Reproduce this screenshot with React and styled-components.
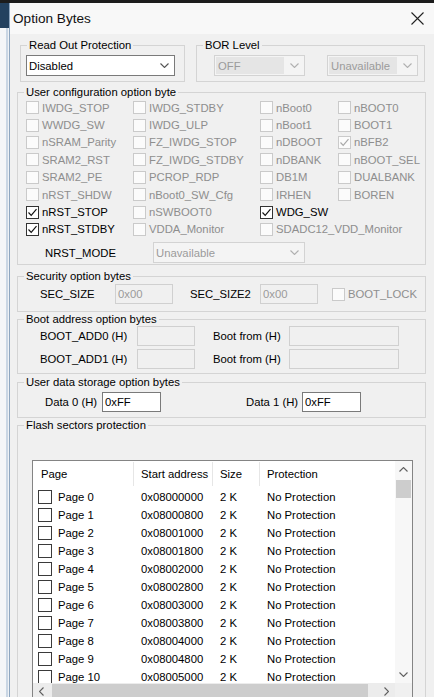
import React from 'react';
import styled, { createGlobalStyle } from 'styled-components';

const GlobalStyle = createGlobalStyle`
  html, body { margin: 0; padding: 0; width: 434px; height: 697px; overflow: hidden; background: #f0f0f0; }
  body { font-family: "Liberation Sans", Arial, sans-serif; font-size: 11.3px; color: #000; }
  * { box-sizing: border-box; }
`;

const Screen = styled.div`
  width: 434px; height: 697px; overflow: hidden;
  display: flex; flex-direction: column; background: #1c1c1c;
`;
const TopEdge = styled.div` height: 3px; flex: none; background: #1c1c1c; `;
const Main = styled.div` flex: 1; display: flex; min-height: 0; `;
const BackWindow = styled.div`
  width: 10px; flex: none; display: flex; flex-direction: column;
  border-right: 1px solid #8ea6bf;
`;
const BackTop = styled.div` height: 25px; background: #23415f; `;
const BackBody = styled.div`
  flex: 1; background: linear-gradient(90deg, #f4f6f8 0 6px, #c9d6e4 6px 8px, #eef2f6 8px);
`;
const Dialog = styled.div`
  flex: 1; min-width: 0; display: flex; flex-direction: column; background: #f0f0f0;
`;
const TitleBar = styled.div`
  height: 31px; flex: none; display: flex; align-items: center; justify-content: space-between;
  padding: 0 10px 0 3px; background: #f8f8f8;
`;
const Title = styled.span` font-size: 13.6px; color: #111; `;
const Body = styled.div`
  flex: 1; min-height: 0; display: flex; flex-direction: column; padding: 0 8px 0 7px;
`;
const TopRow = styled.div` display: flex; gap: 11px; padding-left: 3px; margin-top: 4px; `;

const Group = styled.fieldset`
  margin: ${p => p.$mt || 0}px 0 0 0;
  padding: 0;
  border: 1px solid #d4d4d4;
  min-width: 0;
  flex: none;
  width: ${p => (p.$w ? `${p.$w}px` : 'auto')};
  height: ${p => (p.$h ? `${p.$h}px` : 'auto')};
`;
const Legend = styled.legend`
  padding: 0 2px; margin-left: 6px; line-height: 14px; font-size: 11.3px; color: #000;
`;

const SelectBox = styled.div`
  height: 21px; display: flex; align-items: center;
  width: ${p => (p.$w ? `${p.$w}px` : 'auto')};
  border: 1px solid ${p => (p.$disabled ? '#d3d3d3' : '#7a7a7a')};
  background: ${p => (p.$disabled ? '#f4f4f4' : '#fff')};
`;
const SelectValue = styled.div`
  flex: 1; align-self: stretch; display: flex; align-items: center;
  padding-left: ${p => (p.$shade ? 2 : 2)}px;
  margin: ${p => (p.$shade ? '1px' : '0')};
  background: ${p => (p.$shade ? '#e5e5e5' : 'transparent')};
  color: ${p => (p.$disabled ? '#9b9b9b' : '#000')};
  white-space: nowrap; overflow: hidden;
`;
const ChevronSlot = styled.div`
  width: 19px; flex: none; display: flex; align-items: center; justify-content: center;
`;

const Chevron = ({ color = '#555', dir = 'down' }) => (
  <svg width="9" height="5" viewBox="0 0 9 5" style={{ transform: dir === 'up' ? 'rotate(180deg)' : dir === 'left' ? 'rotate(90deg)' : dir === 'right' ? 'rotate(-90deg)' : 'none' }}>
    <path d="M0.5 0.5 L4.5 4.5 L8.5 0.5" fill="none" stroke={color} strokeWidth="1.1" />
  </svg>
);

const Select = ({ value, disabled, shade, w }) => (
  <SelectBox $disabled={disabled} $w={w}>
    <SelectValue $disabled={disabled} $shade={shade}>{value}</SelectValue>
    <ChevronSlot><Chevron color={disabled ? '#b0b0b0' : '#555'} /></ChevronSlot>
  </SelectBox>
);

const RopContent = styled.div` padding: 3px 9px 5px 5px; `;
const BorContent = styled.div` display: flex; gap: 22px; padding: 3px 0 5px 17px; `;

const CheckGrid = styled.div`
  display: grid; grid-template-columns: 107px 127px 78px 1fr;
  grid-auto-rows: 17.4px; padding-left: 8px;
`;
const CheckItem = styled.label`
  display: flex; align-items: center; gap: 3px; white-space: nowrap;
  grid-column: ${p => p.$span || 'auto'};
  color: ${p => (p.$disabled ? '#8e8e8e' : '#000')};
`;
const Box = styled.span`
  width: 13px; height: 13px; flex: none; display: inline-flex; align-items: center; justify-content: center;
  border: 1px solid ${p => (p.$disabled ? '#cacaca' : '#333')};
  background: ${p => (p.$disabled ? '#fbfbfb' : '#fff')};
`;

const CheckMark = ({ color }) => (
  <svg width="11" height="11" viewBox="0 0 11 11">
    <path d="M1.5 5.5 L4.2 8.3 L9.5 2.2" fill="none" stroke={color} strokeWidth="1.2" />
  </svg>
);

const Check = ({ label, checked, disabled, span }) => (
  <CheckItem $disabled={disabled} $span={span}>
    <Box $disabled={disabled}>{checked && <CheckMark color={disabled ? '#a8a8a8' : '#111'} />}</Box>
    {label}
  </CheckItem>
);

const Empty = styled.span``;

const NrstRow = styled.div` display: flex; align-items: center; margin-top: 4px; padding: 0 0 1px 27px; `;
const Label = styled.span`
  width: ${p => p.$w}px; flex: none; margin-left: ${p => p.$ml || 0}px; white-space: nowrap;
  color: ${p => (p.$disabled ? '#8e8e8e' : '#000')};
`;

const FieldRow = styled.div` display: flex; align-items: center; `;
const SecContent = styled(FieldRow)` padding: 1px 0 7px 22px; `;
const BootContent = styled.div` display: flex; flex-direction: column; gap: 3px; padding: 0 0 4px 22px; `;
const DataContent = styled(FieldRow)` padding: 3px 0 5px 27px; `;
const Field = styled.div`
  width: ${p => p.$w}px; height: 20px; flex: none; display: flex; align-items: center; padding-left: 2px;
  border: 1px solid ${p => (p.$disabled ? '#d0d0d0' : '#7a7a7a')};
  background: ${p => (p.$disabled ? '#f0f0f0' : '#fff')};
  color: ${p => (p.$disabled ? '#9b9b9b' : '#000')};
`;
const LockCheck = styled.div` margin-left: 14px; `;

const FlashContent = styled.div` padding: 28px 12px 0 14px; `;
const Table = styled.div`
  height: 250px; border: 1px solid #848484; background: #fff;
  display: grid; grid-template-columns: 1fr 17px; grid-template-rows: 222px 17px;
`;
const ListArea = styled.div` display: flex; flex-direction: column; min-width: 0; overflow: hidden; `;
const cols = '101px 79px 47px 1fr';
const HeaderRow = styled.div`
  height: 27px; flex: none; display: grid; grid-template-columns: ${cols};
`;
const HeaderCell = styled.div`
  display: flex; align-items: center; padding-left: ${p => p.$pl || 7}px;
  border-right: ${p => (p.$last ? 'none' : '1px solid #e6e6e6')};
  margin: 1px 0 2px;
`;
const Rows = styled.div` flex: 1; overflow: hidden; `;
const Row = styled.div`
  height: 18px; display: grid; grid-template-columns: ${cols}; align-items: center; white-space: nowrap;
`;
const PageCell = styled.div` display: flex; align-items: center; gap: 6px; padding-left: 5px; `;
const Cell = styled.div` padding-left: 7px; `;
const TableBox = styled(Box)` width: 14px; height: 14px; border-color: #3a3a3a; `;

const VScroll = styled.div` display: flex; flex-direction: column; background: #f7f7f7; `;
const ArrowBox = styled.div`
  width: 17px; height: 17px; flex: none; display: flex; align-items: center; justify-content: center;
`;
const VThumb = styled.div` height: 18px; margin: 2px 1px 0; background: #cdcdcd; `;
const Spacer = styled.div` flex: 1; `;
const HScroll = styled.div` display: flex; align-items: stretch; background: #ececec; `;
const HThumb = styled.div` width: 316px; margin: 1px 0 0 2px; background: #cdcdcd; `;
const Corner = styled.div` background: #f0f0f0; `;

const CloseIcon = () => (
  <svg width="13" height="13" viewBox="0 0 13 13">
    <path d="M0.5 0.5 L12.5 12.5 M12.5 0.5 L0.5 12.5" stroke="#222" strokeWidth="1.1" />
  </svg>
);

const checks = [
  ['IWDG_STOP', 0, 1], ['IWDG_STDBY', 0, 1], ['nBoot0', 0, 1], ['nBOOT0', 0, 1],
  ['WWDG_SW', 0, 1], ['IWDG_ULP', 0, 1], ['nBoot1', 0, 1], ['BOOT1', 0, 1],
  ['nSRAM_Parity', 0, 1], ['FZ_IWDG_STOP', 0, 1], ['nDBOOT', 0, 1], ['nBFB2', 1, 1],
  ['SRAM2_RST', 0, 1], ['FZ_IWDG_STDBY', 0, 1], ['nDBANK', 0, 1], ['nBOOT_SEL', 0, 1],
  ['SRAM2_PE', 0, 1], ['PCROP_RDP', 0, 1], ['DB1M', 0, 1], ['DUALBANK', 0, 1],
  ['nRST_SHDW', 0, 1], ['nBoot0_SW_Cfg', 0, 1], ['IRHEN', 0, 1], ['BOREN', 0, 1],
  ['nRST_STOP', 1, 0], ['nSWBOOT0', 0, 1], ['WDG_SW', 1, 0], null,
  ['nRST_STDBY', 1, 0], ['VDDA_Monitor', 0, 1], ['SDADC12_VDD_Monitor', 0, 1, '3 / 5'],
];

const pages = Array.from({ length: 11 }, (_, i) => ({
  name: `Page ${i}`,
  addr: '0x' + (0x08000000 + i * 0x800).toString(16).toUpperCase().padStart(8, '0'),
}));

export default function App() {
  return (
    <>
      <GlobalStyle />
      <Screen>
        <TopEdge />
        <Main>
          <BackWindow><BackTop /><BackBody /></BackWindow>
          <Dialog>
            <TitleBar>
              <Title>Option Bytes</Title>
              <CloseIcon />
            </TitleBar>
            <Body>
              <TopRow>
                <Group $w={165}>
                  <Legend>Read Out Protection</Legend>
                  <RopContent><Select value="Disabled" /></RopContent>
                </Group>
                <Group $w={229}>
                  <Legend>BOR Level</Legend>
                  <BorContent>
                    <Select value="OFF" disabled shade w={91} />
                    <Select value="Unavailable" disabled shade w={91} />
                  </BorContent>
                </Group>
              </TopRow>

              <Group $mt={3}>
                <Legend>User configuration option byte</Legend>
                <CheckGrid>
                  {checks.map((c, i) =>
                    c ? <Check key={i} label={c[0]} checked={!!c[1]} disabled={!!c[2]} span={c[3]} /> : <Empty key={i} />
                  )}
                </CheckGrid>
                <NrstRow>
                  <Label $w={108}>NRST_MODE</Label>
                  <Select value="Unavailable" disabled w={152} />
                </NrstRow>
              </Group>

              <Group $mt={4}>
                <Legend>Security option bytes</Legend>
                <SecContent>
                  <Label $w={75}>SEC_SIZE</Label>
                  <Field $w={58} $disabled>0x00</Field>
                  <Label $w={70} $ml={17}>SEC_SIZE2</Label>
                  <Field $w={58} $disabled>0x00</Field>
                  <LockCheck><Check label="BOOT_LOCK" disabled /></LockCheck>
                </SecContent>
              </Group>

              <Group>
                <Legend>Boot address option bytes</Legend>
                <BootContent>
                  <FieldRow>
                    <Label $w={97}>BOOT_ADD0 (H)</Label>
                    <Field $w={58} $disabled />
                    <Label $w={76} $ml={18}>Boot from (H)</Label>
                    <Field $w={110} $disabled />
                  </FieldRow>
                  <FieldRow>
                    <Label $w={97}>BOOT_ADD1 (H)</Label>
                    <Field $w={58} $disabled />
                    <Label $w={76} $ml={18}>Boot from (H)</Label>
                    <Field $w={110} $disabled />
                  </FieldRow>
                </BootContent>
              </Group>

              <Group $mt={1}>
                <Legend>User data storage option bytes</Legend>
                <DataContent>
                  <Label $w={57}>Data 0 (H)</Label>
                  <Field $w={59}>0xFF</Field>
                  <Label $w={56} $ml={85}>Data 1 (H)</Label>
                  <Field $w={59}>0xFF</Field>
                </DataContent>
              </Group>

              <Group $h={320}>
                <Legend>Flash sectors protection</Legend>
                <FlashContent>
                  <Table>
                    <ListArea>
                      <HeaderRow>
                        <HeaderCell $pl={8}>Page</HeaderCell>
                        <HeaderCell>Start address</HeaderCell>
                        <HeaderCell>Size</HeaderCell>
                        <HeaderCell $last>Protection</HeaderCell>
                      </HeaderRow>
                      <Rows>
                        {pages.map(p => (
                          <Row key={p.name}>
                            <PageCell><TableBox />{p.name}</PageCell>
                            <Cell>{p.addr}</Cell>
                            <Cell>2 K</Cell>
                            <Cell>No Protection</Cell>
                          </Row>
                        ))}
                      </Rows>
                    </ListArea>
                    <VScroll>
                      <ArrowBox><Chevron dir="up" color="#606060" /></ArrowBox>
                      <VThumb />
                      <Spacer />
                      <ArrowBox><Chevron color="#606060" /></ArrowBox>
                    </VScroll>
                    <HScroll>
                      <ArrowBox><Chevron dir="left" color="#606060" /></ArrowBox>
                      <HThumb />
                      <Spacer />
                      <ArrowBox><Chevron dir="right" color="#606060" /></ArrowBox>
                    </HScroll>
                    <Corner />
                  </Table>
                </FlashContent>
              </Group>
            </Body>
          </Dialog>
        </Main>
      </Screen>
    </>
  );
}
